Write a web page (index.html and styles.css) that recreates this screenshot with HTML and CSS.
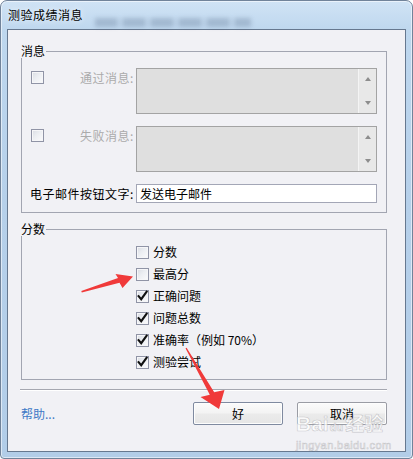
FILE: index.html
```html
<!DOCTYPE html>
<html lang="zh-CN">
<head>
<meta charset="utf-8">
<title>测验成绩消息</title>
<link rel="stylesheet" href="styles.css">
</head>
<body>
<div class="window">
  <div class="titlebar">
    <span class="title">测验成绩消息</span>
    <span class="glass-blur"></span>
  </div>
  <div class="client">
    <fieldset class="group group-msg">
      <legend>消息</legend>
      <div class="msg-grid">
        <span class="cb-cell"><span class="cb"></span></span>
        <span class="lbl disabled">通过消息:</span>
        <div class="memo"><div class="memo-body"></div><div class="memo-scroll"><i class="arr up"></i><i class="arr down"></i></div></div>

        <span class="cb-cell"><span class="cb"></span></span>
        <span class="lbl disabled">失败消息:</span>
        <div class="memo"><div class="memo-body"></div><div class="memo-scroll"><i class="arr up"></i><i class="arr down"></i></div></div>

        <span class="lbl email-lbl">电子邮件按钮文字:</span>
        <div class="input">发送电子邮件</div>
      </div>
    </fieldset>

    <fieldset class="group group-score">
      <legend>分数</legend>
      <ul class="checks">
        <li><span class="cb"></span>分数</li>
        <li><span class="cb"></span>最高分</li>
        <li><span class="cb"><svg viewBox="0 0 13 13"><path d="M2.6 6.2 L5.2 9.2 L10.6 1.8"/></svg></span>正确问题</li>
        <li><span class="cb"><svg viewBox="0 0 13 13"><path d="M2.6 6.2 L5.2 9.2 L10.6 1.8"/></svg></span>问题总数</li>
        <li><span class="cb"><svg viewBox="0 0 13 13"><path d="M2.6 6.2 L5.2 9.2 L10.6 1.8"/></svg></span>准确率（例如 70%）</li>
        <li><span class="cb"><svg viewBox="0 0 13 13"><path d="M2.6 6.2 L5.2 9.2 L10.6 1.8"/></svg></span>测验尝试</li>
      </ul>
    </fieldset>

    <div class="sep"></div>

    <div class="actions">
      <a class="help">帮助...</a>
      <button class="btn btn-default">好</button>
      <button class="btn btn-cancel">取消</button>
    </div>
  </div>

  <svg class="annot" viewBox="0 0 413 459" width="413" height="459">
    <polygon points="81.3,291 118,278 115.5,274 133,276.5 122.5,288 119.5,282.8 81.8,292.5"/>
    <polygon points="186.6,347.7 214.2,392.3 224.5,390 219,409 200.5,397 209.8,394.7 185.5,348.3"/>
  </svg>

  <div class="watermark">
    <div class="wm-top"><span class="wm-bai">Bai</span><span class="wm-du">du</span><span class="wm-jy">经验</span></div>
    <div class="wm-url">jingyan.baidu.com</div>
  </div>
</div>
</body>
</html>
```

FILE: styles.css
```css
html, body {
  margin: 0;
  padding: 0;
}

body {
  font-family: "Noto Sans CJK SC", "Noto Sans", sans-serif;
  font-size: 12px;
  color: #000;
}

.window {
  position: relative;
  width: 413px;
  height: 459px;
  box-sizing: border-box;
  border: 1px solid #71839a;
  border-radius: 7px 7px 4px 4px;
  background: linear-gradient(180deg, #d0e3f5 0px, #bed7ee 30px, #b6d0ea 200px, #b2cde8 100%);
  box-shadow: inset 0 0 0 1px rgba(255, 255, 255, 0.55);
  padding: 0 6px 6px 6px;
  display: flex;
  flex-direction: column;
  overflow: hidden;
}

.titlebar {
  height: 28px;
  display: flex;
  align-items: center;
  padding-left: 1px;
  padding-bottom: 1px;
  box-sizing: border-box;
}

.title {
  font-size: 12px;
  letter-spacing: 0.5px;
  line-height: 14px;
  color: #000;
  text-shadow: 0 0 6px rgba(255, 255, 255, 0.9);
}

.glass-blur {
  align-self: flex-start;
  margin-top: 17px;
  margin-left: 12px;
  width: 156px;
  height: 9px;
  background: repeating-linear-gradient(90deg, rgba(80, 100, 130, 0.28) 0 22px, rgba(80, 100, 130, 0.08) 22px 28px);
  filter: blur(2px);
}

.client {
  flex: 1;
  border: 1px solid #66788f;
  background: #f1f1f5;
  display: flex;
  flex-direction: column;
}

.group {
  min-width: 0;
  margin: 0 18px 0 13px;
  padding: 0;
  border: 1px solid #a2a5b1;
}

.group legend {
  margin-left: -1px;
  padding: 0 1px 0 0;
  font-size: 12px;
  line-height: 14px;
  color: #000;
}

.group-msg {
  margin-top: 14px;
}

.msg-grid {
  display: grid;
  grid-template-columns: 50px 56px 241px;
  grid-template-rows: 46px 46px 19px;
  row-gap: 12px;
  align-items: start;
  padding: 10px 6px 9px 8px;
}

.cb-cell {
  padding: 3px 0 0 1px;
  line-height: 0;
}

.lbl {
  letter-spacing: 0.5px;
  line-height: 14px;
  white-space: nowrap;
}

.lbl.disabled {
  color: #ababab;
  text-align: right;
  padding-right: 3px;
  margin-top: 3px;
}

.email-lbl {
  grid-column: 1 / 3;
  align-self: center;
}

.memo {
  height: 46px;
  box-sizing: border-box;
  border: 1px solid #a3a3a3;
  background: #dfdfdf;
  display: flex;
}

.memo-body {
  flex: 1;
}

.memo-scroll {
  width: 18px;
  box-sizing: border-box;
  background: #e8e8e8;
  border-left: 1px solid #f4f4f4;
  display: flex;
  flex-direction: column;
  justify-content: space-between;
  align-items: center;
  padding: 8px 0 8px 0;
}

.arr {
  display: block;
  width: 0;
  height: 0;
  border-left: 3.5px solid transparent;
  border-right: 3.5px solid transparent;
}

.arr.up {
  border-bottom: 4px solid #8d8d8d;
}

.arr.down {
  border-top: 4px solid #8d8d8d;
}

.input {
  grid-column: 3;
  height: 19px;
  box-sizing: border-box;
  border: 1px solid #a3a6b6;
  background: #fff;
  padding-left: 3px;
  line-height: 17px;
  font-size: 12px;
  color: #000;
  white-space: nowrap;
}

.group-score {
  margin-top: 9px;
}

.checks {
  list-style: none;
  margin: 0;
  padding: 5px 0 6px 114px;
}

.checks li {
  height: 22px;
  display: flex;
  align-items: center;
  line-height: 14px;
  white-space: nowrap;
}

.checks .cb {
  margin-right: 4px;
}

.cb {
  display: inline-block;
  position: relative;
  width: 13px;
  height: 13px;
  box-sizing: border-box;
  border: 1px solid #9094a6;
  background: linear-gradient(135deg, #d9dce3 0%, #eceef2 45%, #fbfbfc 100%);
  box-shadow: inset 0 0 0 1px #f6f6f8;
  flex: none;
}

.cb svg {
  position: absolute;
  left: -1px;
  top: -1px;
  width: 13px;
  height: 13px;
  overflow: visible;
}

.cb svg path {
  fill: none;
  stroke: #111;
  stroke-width: 2.1;
  stroke-linecap: square;
  stroke-linejoin: miter;
}

.sep {
  height: 1px;
  margin: 9px 18px 0 12px;
  background: #a5a7b0;
  box-shadow: 0 1px 0 #ffffff;
}

.actions {
  display: flex;
  align-items: center;
  margin: 12px 18px 0 13px;
}

.help {
  margin-right: auto;
  color: #3d79c6;
  font-size: 12px;
  line-height: 14px;
  cursor: pointer;
}

.btn {
  width: 90px;
  height: 23px;
  box-sizing: border-box;
  border: 1px solid #8c8e96;
  border-radius: 2px;
  background: linear-gradient(180deg, #fbfbfb 0%, #f3f3f3 48%, #ebebeb 52%, #e6e6e6 100%);
  box-shadow: inset 0 0 0 1px #fdfdfd;
  font-family: "Noto Sans CJK SC", "Noto Sans", sans-serif;
  font-size: 12px;
  line-height: 14px;
  color: #000;
  padding: 0;
}

.btn-default {
  border-color: #7f8aa0;
}

.btn-cancel {
  margin-left: 14px;
  border-color: #9a9ca4;
}

.annot {
  position: absolute;
  left: -1px;
  top: -1px;
  pointer-events: none;
}

.annot polygon {
  fill: #f03a3a;
}

.watermark {
  position: absolute;
  left: 295px;
  top: 410px;
  pointer-events: none;
  color: rgba(255, 255, 255, 0.75);
  -webkit-text-stroke: 0.6px rgba(160, 160, 165, 0.55);
}

.wm-top {
  display: flex;
  align-items: baseline;
  line-height: 24px;
  white-space: nowrap;
}

.wm-bai {
  font-family: "Liberation Sans", Arial, sans-serif;
  font-weight: bold;
  font-size: 21px;
}

.wm-du {
  font-family: "Liberation Sans", Arial, sans-serif;
  font-weight: bold;
  font-size: 11px;
  margin: 0 2px 0 1px;
}

.wm-jy {
  font-family: "Noto Sans CJK SC", sans-serif;
  font-weight: bold;
  font-size: 19px;
}

.wm-url {
  font-family: "Liberation Sans", Arial, sans-serif;
  font-size: 11px;
  line-height: 12px;
  letter-spacing: 0.4px;
  white-space: nowrap;
}
```
